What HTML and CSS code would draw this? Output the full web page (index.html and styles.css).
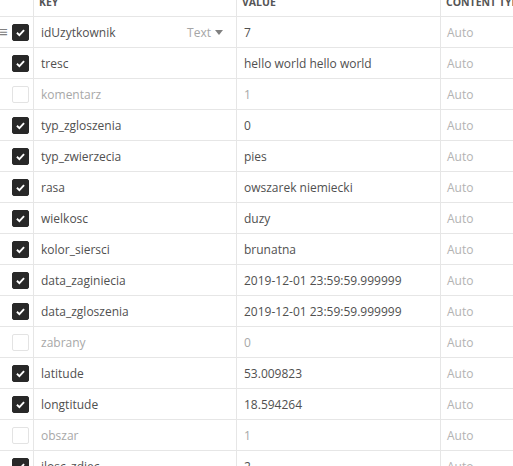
FILE: index.html
```html
<!DOCTYPE html>
<html>
<head>
<meta charset="utf-8">
<link rel="stylesheet" href="styles.css">
</head>
<body>
<div class="table">
  <div class="row head">
    <div class="cell sel"></div>
    <div class="cell key">KEY</div>
    <div class="cell val">VALUE</div>
    <div class="cell ct">CONTENT TYPE</div>
  </div>
  <div class="row">
    <div class="cell sel"><span class="drag">≡</span><span class="cb on"><svg viewBox="0 0 16 16"><path d="M4.2 8.3l2.6 2.5 5-5.3" fill="none" stroke="#fff" stroke-width="2"/></svg></span></div>
    <div class="cell key">idUzytkownik<span class="type">Text <span class="caret"></span></span></div>
    <div class="cell val">7</div>
    <div class="cell ct">Auto</div>
  </div>
  <div class="row">
    <div class="cell sel"><span class="cb on"><svg viewBox="0 0 16 16"><path d="M4.2 8.3l2.6 2.5 5-5.3" fill="none" stroke="#fff" stroke-width="2"/></svg></span></div>
    <div class="cell key">tresc</div>
    <div class="cell val">hello world hello world</div>
    <div class="cell ct">Auto</div>
  </div>
  <div class="row off">
    <div class="cell sel"><span class="cb"></span></div>
    <div class="cell key">komentarz</div>
    <div class="cell val">1</div>
    <div class="cell ct">Auto</div>
  </div>
  <div class="row">
    <div class="cell sel"><span class="cb on"><svg viewBox="0 0 16 16"><path d="M4.2 8.3l2.6 2.5 5-5.3" fill="none" stroke="#fff" stroke-width="2"/></svg></span></div>
    <div class="cell key">typ_zgloszenia</div>
    <div class="cell val">0</div>
    <div class="cell ct">Auto</div>
  </div>
  <div class="row">
    <div class="cell sel"><span class="cb on"><svg viewBox="0 0 16 16"><path d="M4.2 8.3l2.6 2.5 5-5.3" fill="none" stroke="#fff" stroke-width="2"/></svg></span></div>
    <div class="cell key">typ_zwierzecia</div>
    <div class="cell val">pies</div>
    <div class="cell ct">Auto</div>
  </div>
  <div class="row">
    <div class="cell sel"><span class="cb on"><svg viewBox="0 0 16 16"><path d="M4.2 8.3l2.6 2.5 5-5.3" fill="none" stroke="#fff" stroke-width="2"/></svg></span></div>
    <div class="cell key">rasa</div>
    <div class="cell val">owszarek niemiecki</div>
    <div class="cell ct">Auto</div>
  </div>
  <div class="row">
    <div class="cell sel"><span class="cb on"><svg viewBox="0 0 16 16"><path d="M4.2 8.3l2.6 2.5 5-5.3" fill="none" stroke="#fff" stroke-width="2"/></svg></span></div>
    <div class="cell key">wielkosc</div>
    <div class="cell val">duzy</div>
    <div class="cell ct">Auto</div>
  </div>
  <div class="row">
    <div class="cell sel"><span class="cb on"><svg viewBox="0 0 16 16"><path d="M4.2 8.3l2.6 2.5 5-5.3" fill="none" stroke="#fff" stroke-width="2"/></svg></span></div>
    <div class="cell key">kolor_siersci</div>
    <div class="cell val">brunatna</div>
    <div class="cell ct">Auto</div>
  </div>
  <div class="row">
    <div class="cell sel"><span class="cb on"><svg viewBox="0 0 16 16"><path d="M4.2 8.3l2.6 2.5 5-5.3" fill="none" stroke="#fff" stroke-width="2"/></svg></span></div>
    <div class="cell key">data_zaginiecia</div>
    <div class="cell val">2019-12-01 23:59:59.999999</div>
    <div class="cell ct">Auto</div>
  </div>
  <div class="row">
    <div class="cell sel"><span class="cb on"><svg viewBox="0 0 16 16"><path d="M4.2 8.3l2.6 2.5 5-5.3" fill="none" stroke="#fff" stroke-width="2"/></svg></span></div>
    <div class="cell key">data_zgloszenia</div>
    <div class="cell val">2019-12-01 23:59:59.999999</div>
    <div class="cell ct">Auto</div>
  </div>
  <div class="row off">
    <div class="cell sel"><span class="cb"></span></div>
    <div class="cell key">zabrany</div>
    <div class="cell val">0</div>
    <div class="cell ct">Auto</div>
  </div>
  <div class="row">
    <div class="cell sel"><span class="cb on"><svg viewBox="0 0 16 16"><path d="M4.2 8.3l2.6 2.5 5-5.3" fill="none" stroke="#fff" stroke-width="2"/></svg></span></div>
    <div class="cell key">latitude</div>
    <div class="cell val">53.009823</div>
    <div class="cell ct">Auto</div>
  </div>
  <div class="row">
    <div class="cell sel"><span class="cb on"><svg viewBox="0 0 16 16"><path d="M4.2 8.3l2.6 2.5 5-5.3" fill="none" stroke="#fff" stroke-width="2"/></svg></span></div>
    <div class="cell key">longtitude</div>
    <div class="cell val">18.594264</div>
    <div class="cell ct">Auto</div>
  </div>
  <div class="row off">
    <div class="cell sel"><span class="cb"></span></div>
    <div class="cell key">obszar</div>
    <div class="cell val">1</div>
    <div class="cell ct">Auto</div>
  </div>
  <div class="row">
    <div class="cell sel"><span class="cb on"><svg viewBox="0 0 16 16"><path d="M4.2 8.3l2.6 2.5 5-5.3" fill="none" stroke="#fff" stroke-width="2"/></svg></span></div>
    <div class="cell key">ilosc_zdjec</div>
    <div class="cell val">2</div>
    <div class="cell ct">Auto</div>
  </div>
</div>
</body>
</html>
```

FILE: styles.css
```css
html, body {
  margin: 0;
  padding: 0;
  background: #fff;
  overflow: hidden;
}
body {
  font-family: "Open Sans", "Liberation Sans", sans-serif;
  font-size: 12px;
  color: #505050;
}
.table {
  width: 513px;
  margin-top: -14px;
}
.row {
  display: grid;
  grid-template-columns: 34px 203px 204px 72px;
  height: 31px;
}
.cell {
  box-sizing: border-box;
  border-right: 1px solid #e6e6e6;
  border-bottom: 1px solid #e6e6e6;
  display: flex;
  align-items: center;
  white-space: nowrap;
  overflow: hidden;
}
.key { padding-left: 7px; }
.val { padding-left: 7px; }
.ct { padding-left: 6px; color: #b3b3b3; border-right: none; }
.head .cell {
  font-size: 10.5px;
  font-weight: 700;
  color: #555;
  letter-spacing: 0;
  align-items: flex-end;
  padding-bottom: 7px;
}
.head .key { padding-left: 5px; }
.head .val { padding-left: 5px; }
.head .ct { padding-left: 5px; color: #555; }
.sel {
  position: relative;
  justify-content: flex-start;
  padding-left: 12px;
}
.drag {
  position: absolute;
  left: -1px;
  top: 6px;
  font-size: 15px;
  line-height: 16px;
  color: #808080;
}
.cb {
  width: 17px;
  height: 17px;
  box-sizing: border-box;
  border-radius: 2px;
  border: 1px solid #e3e3e3;
  background: #fff;
  display: block;
}
.cb.on {
  background: #282828;
  border-color: #282828;
}
.cb svg {
  display: block;
  width: 15px;
  height: 15px;
}
.key .type {
  margin-left: auto;
  margin-right: 13px;
  color: #a6a6a6;
  display: flex;
  align-items: center;
}
.caret {
  display: inline-block;
  width: 0;
  height: 0;
  margin-left: 4px;
  border-left: 4px solid transparent;
  border-right: 4px solid transparent;
  border-top: 5px solid #808080;
}
.off .key, .off .val { color: #a8a8a8; }
```
